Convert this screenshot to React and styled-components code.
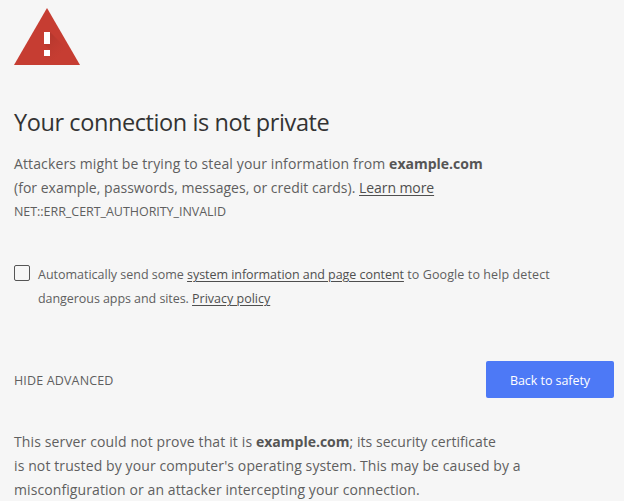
import React from 'react';
import styled, { createGlobalStyle } from 'styled-components';

const GlobalStyle = createGlobalStyle`
  * { box-sizing: border-box; }
  html, body { margin: 0; background: #f6f6f6; overflow: hidden; }
`;

const Page = styled.main`
  height: 501px;
  width: 624px;
  overflow: hidden;
  padding: 8px 10px 0 14px;
  background: #f6f6f6;
  color: #5f5f5f;
  font-family: 'Open Sans', 'Noto Sans', sans-serif;
  font-size: 14px;
  line-height: 24px;
`;

const WarningIcon = styled.svg`
  display: block;
  width: 66px;
  height: 57px;
`;

const Title = styled.h1`
  margin: 41px 0 14px;
  color: #333;
  font-size: 23.5px;
  font-weight: 400;
  line-height: 32px;
`;

const Line = styled.span`
  display: block;
  width: max-content;
  white-space: pre;
  letter-spacing: ${({ $track = 0 }) => $track}px;
`;

const Run = styled.span`
  letter-spacing: ${({ $track = 0 }) => $track}px;
`;

const Host = styled.b`
  letter-spacing: 0;
  color: #555;
`;

const Paragraph = styled.p`
  margin: 0;
`;

const ErrorCode = styled.div`
  font-size: 12.5px;
`;

const Link = styled.a`
  color: #4f4f4f;
  letter-spacing: ${({ $track = 0 }) => $track}px;
  text-decoration: underline;
  text-decoration-thickness: 1px;
  text-underline-offset: 2px;
  text-decoration-skip-ink: auto;
`;

const OptIn = styled.label`
  display: flex;
  gap: 8px;
  margin-top: 38px;
  font-size: 12.5px;
`;

const OptInText = styled.span`
  padding-top: 1px;
`;

const Checkbox = styled.input`
  appearance: none;
  flex: none;
  width: 16px;
  height: 16px;
  margin: 3px 0 0;
  border: 1px solid #555;
  border-radius: 2px;
`;

const Actions = styled.div`
  display: flex;
  align-items: center;
  justify-content: space-between;
  height: 37px;
  margin: 50px 0 32px;
`;

const AdvancedToggle = styled.button`
  padding: 2px 0 0;
  border: 0;
  background: none;
  color: #5f5f5f;
  font: 12.5px/24px 'Open Sans', sans-serif;
`;

const SafetyButton = styled.button`
  display: flex;
  align-items: center;
  justify-content: center;
  width: 128px;
  height: 37px;
  padding: 2px 0 0;
  border: 0;
  border-radius: 2px;
  background: #4d79f6;
  color: #fff;
  font: 12.5px/24px 'Open Sans', sans-serif;
`;

export default function App() {
  return (
    <>
      <GlobalStyle />
      <Page>
        <WarningIcon viewBox="0 0 66 57" aria-label="Warning">
          <defs>
            <linearGradient id="shade" x1="30" y1="24" x2="58" y2="52" gradientUnits="userSpaceOnUse">
              <stop offset="0" stopColor="#9d2f26" stopOpacity=".6" />
              <stop offset=".7" stopColor="#b5382e" stopOpacity="0" />
            </linearGradient>
          </defs>
          <path d="M33 0 66 57H0Z" fill="#c63d32" />
          <path d="M36 24 55.500 43.500 63.300 57H39L30 48 36 42 30 36Z" fill="url(#shade)" />
          <path d="M30 24h6v12h-6zM30 42h6v6h-6z" fill="#fff" />
        </WarningIcon>
        <Title><Line $track={-0.41}>Your connection is not private</Line></Title>
        <Paragraph>
          <Line $track={0.12}>Attackers might be trying to steal your information from <Host>example.com</Host></Line>
          <Line $track={0.02}>(for example, passwords, messages, or credit cards). <Link $track={-0.08}>Learn more</Link></Line>
        </Paragraph>
        <ErrorCode><Line $track={-0.04}>NET::ERR_CERT_AUTHORITY_INVALID</Line></ErrorCode>
        <OptIn>
          <Checkbox type="checkbox" />
          <OptInText>
            <Line $track={-0.01}>Automatically send some <Link $track={-0.05}>system information and page content</Link><Run $track={0.1}> to Google to help detect</Run></Line>
            <Line $track={-0.06}>dangerous apps and sites. <Link>Privacy policy</Link></Line>
          </OptInText>
        </OptIn>
        <Actions>
          <AdvancedToggle><Line $track={0.15}>HIDE ADVANCED</Line></AdvancedToggle>
          <SafetyButton><Line $track={-0.06}>Back to safety</Line></SafetyButton>
        </Actions>
        <Paragraph>
          <Line $track={0.13}>This server could not prove that it is <Host>example.com</Host><Run $track={0.04}>; its security certificate</Run></Line>
          <Line $track={0.105}>is not trusted by your computer's operating system. This may be caused by a</Line>
          <Line $track={0.09}>misconfiguration or an attacker intercepting your connection.</Line>
        </Paragraph>
      </Page>
    </>
  );
}
